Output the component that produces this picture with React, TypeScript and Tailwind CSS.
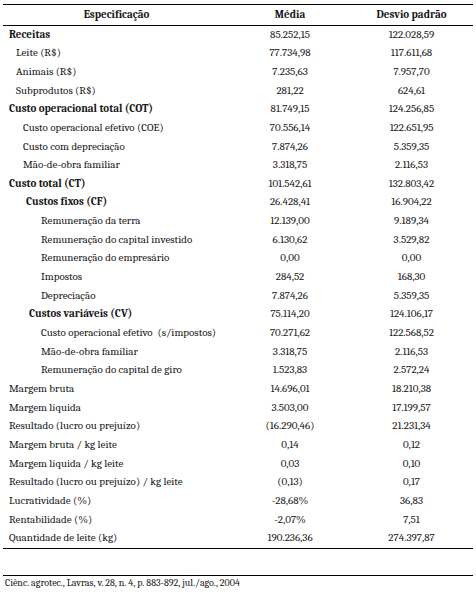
const rows: { label: string; media: string; desvio: string; indent: string; bold?: boolean }[] = [
  { label: "Receitas", media: "85.252,15", desvio: "122.028,59", indent: "pl-[6px]", bold: true },
  { label: "Leite (R$)", media: "77.734,98", desvio: "117.611,68", indent: "pl-[13px]" },
  { label: "Animais (R$)", media: "7.235,63", desvio: "7.957,70", indent: "pl-[13px]" },
  { label: "Subprodutos (R$)", media: "281,22", desvio: "624,61", indent: "pl-[13px]" },
  { label: "Custo operacional total (COT)", media: "81.749,15", desvio: "124.256,85", indent: "pl-[6px]", bold: true },
  { label: "Custo operacional efetivo (COE)", media: "70.556,14", desvio: "122.651,95", indent: "pl-[20px]" },
  { label: "Custo com depreciação", media: "7.874,26", desvio: "5.359,35", indent: "pl-[20px]" },
  { label: "Mão-de-obra familiar", media: "3.318,75", desvio: "2.116,53", indent: "pl-[20px]" },
  { label: "Custo total (CT)", media: "101.542,61", desvio: "132.803,42", indent: "pl-[6px]", bold: true },
  { label: "Custos fixos (CF)", media: "26.428,41", desvio: "16.904,22", indent: "pl-[23px]", bold: true },
  { label: "Remuneração da terra", media: "12.139,00", desvio: "9.189,34", indent: "pl-[38px]" },
  { label: "Remuneração do capital investido", media: "6.130,62", desvio: "3.529,82", indent: "pl-[38px]" },
  { label: "Remuneração do empresário", media: "0,00", desvio: "0,00", indent: "pl-[38px]" },
  { label: "Impostos", media: "284,52", desvio: "168,30", indent: "pl-[38px]" },
  { label: "Depreciação", media: "7.874,26", desvio: "5.359,35", indent: "pl-[38px]" },
  { label: "Custos variáveis (CV)", media: "75.114,20", desvio: "124.106,17", indent: "pl-[26px]", bold: true },
  { label: "Custo operacional efetivo  (s/impostos)", media: "70.271,62", desvio: "122.568,52", indent: "pl-[38px]" },
  { label: "Mão-de-obra familiar", media: "3.318,75", desvio: "2.116,53", indent: "pl-[38px]" },
  { label: "Remuneração do capital de giro", media: "1.523,83", desvio: "2.572,24", indent: "pl-[38px]" },
  { label: "Margem bruta", media: "14.696,01", desvio: "18.210,38", indent: "pl-[6px]" },
  { label: "Margem líquida", media: "3.503,00", desvio: "17.199,57", indent: "pl-[6px]" },
  { label: "Resultado (lucro ou prejuízo)", media: "(16.290,46)", desvio: "21.231,34", indent: "pl-[6px]" },
  { label: "Margem bruta / kg leite", media: "0,14", desvio: "0,12", indent: "pl-[6px]" },
  { label: "Margem líquida / kg leite", media: "0,03", desvio: "0,10", indent: "pl-[6px]" },
  { label: "Resultado (lucro ou prejuízo) / kg leite", media: "(0,13)", desvio: "0,17", indent: "pl-[6px]" },
  { label: "Lucratividade (%)", media: "-28,68%", desvio: "36,83", indent: "pl-[6px]" },
  { label: "Rentabilidade (%)", media: "-2,07%", desvio: "7,51", indent: "pl-[6px]" },
  { label: "Quantidade de leite (kg)", media: "190.236,36", desvio: "274.397,87", indent: "pl-[6px]" },
];

export default function App() {
  return (
    <div className="w-[476px] h-[596px] bg-white pt-[4px] font-serif text-[11px] text-[#151515]">
      {/* tabela */}
      <div className="mx-[3px] border-t-[1.5px] border-b-[1.5px] border-black">
        <div className="grid grid-cols-[227px_120px_1fr] h-[20.5px] items-center border-b-[1.5px] border-black font-bold">
          <div className="text-center">Especificação</div>
          <div className="text-center">Média</div>
          <div className="text-center">Desvio padrão</div>
        </div>
        {rows.map((r, i) => (
          <div key={i} className="grid grid-cols-[227px_120px_1fr] h-[18.67px] items-center">
            <div className={`${r.indent} whitespace-pre ${r.bold ? "font-bold" : ""}`}>{r.label}</div>
            <div className="text-center">{r.media}</div>
            <div className="text-center">{r.desvio}</div>
          </div>
        ))}
      </div>

      {/* rodapé */}
      <div className="mx-[3px] mt-[26px] border-t-[1.5px] border-black pt-[1px] pl-[2px] text-[10px] leading-[13px]">
        Ciênc. agrotec., Lavras, v. 28, n. 4, p. 883-892, jul./ago., 2004
      </div>
    </div>
  );
}
